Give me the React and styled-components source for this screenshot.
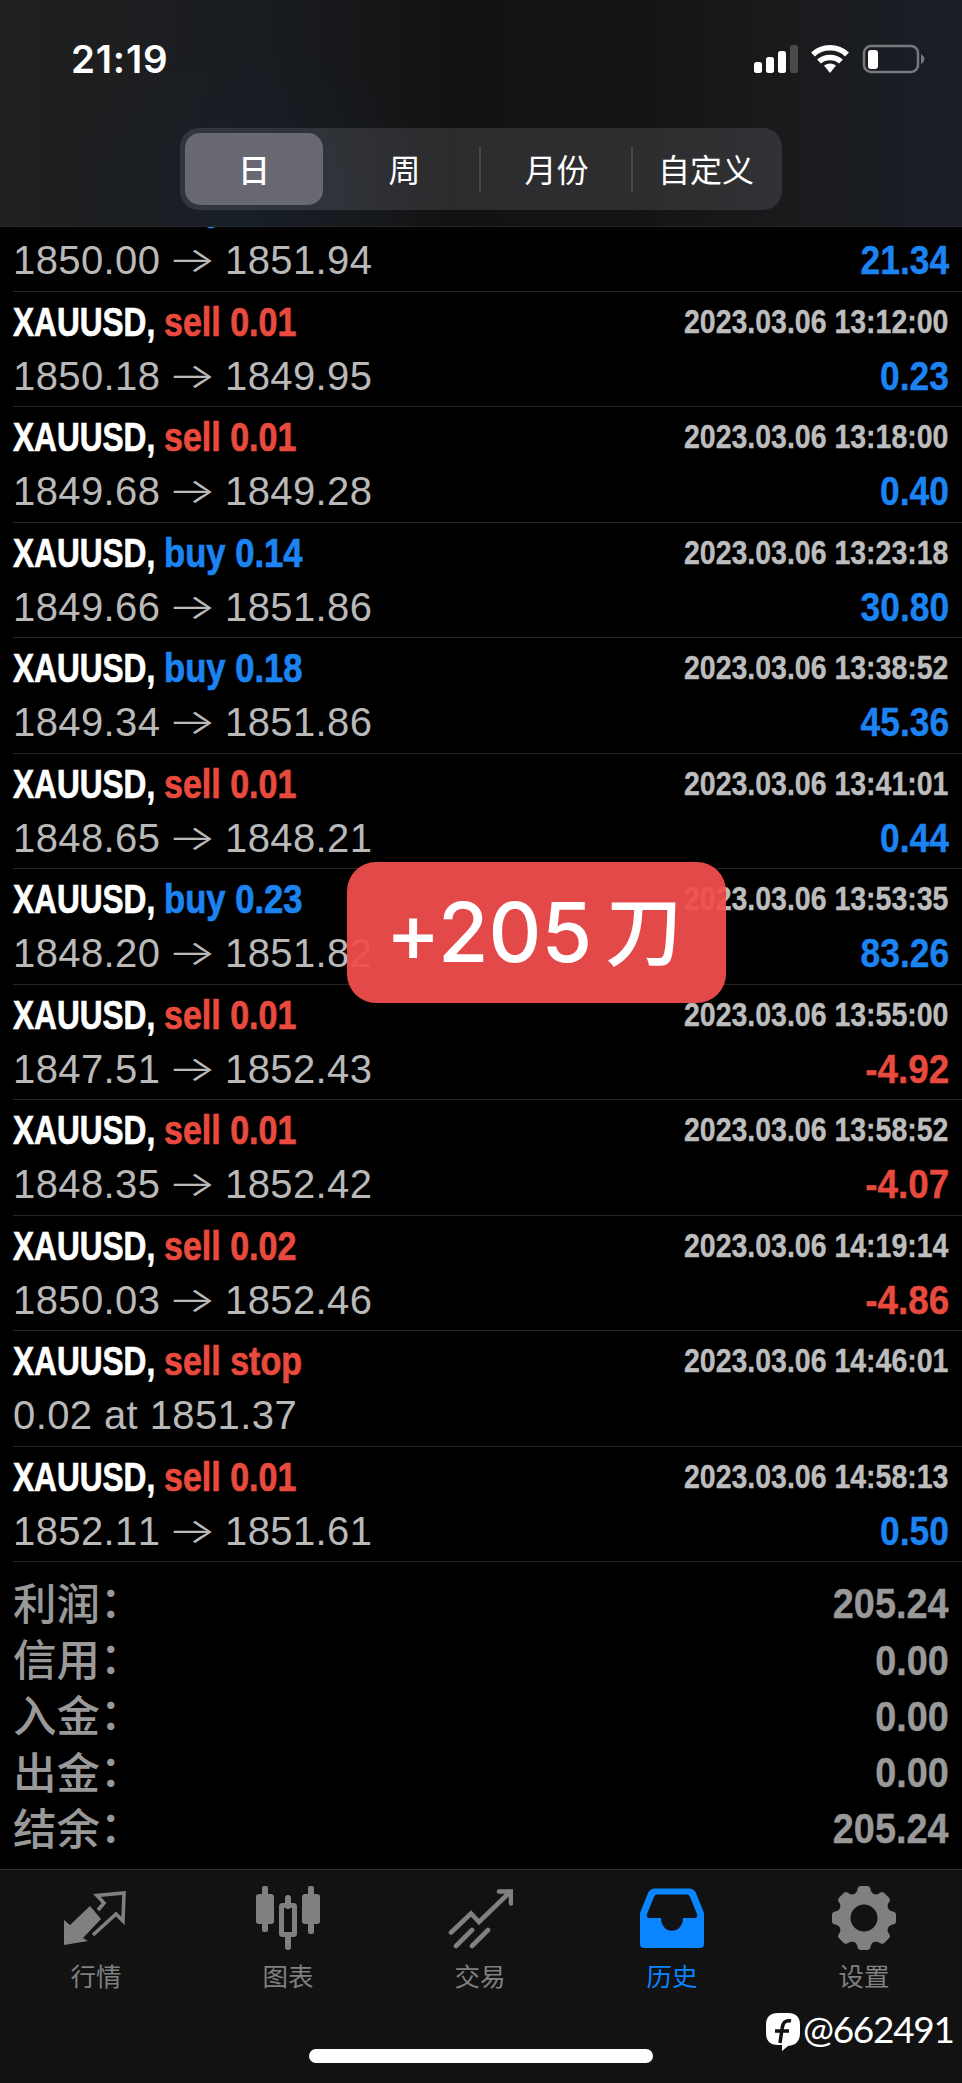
import React from 'react';
import styled, { createGlobalStyle } from 'styled-components';

const RED = '#e84a3e';
const BLUE = '#1c84f2';
const CJK = '"Noto Sans CJK SC", sans-serif';

const Global = createGlobalStyle`
  * { box-sizing: border-box; }
  body { margin: 0; background: #000; }
`;

const Screen = styled.div`
  position: relative;
  width: 962px;
  height: 2083px;
  overflow: hidden;
  display: flex;
  flex-direction: column;
  background: #000;
  color: #fff;
  font-family: "Liberation Sans", ${CJK};
`;

const Header = styled.header`
  flex: 0 0 227px;
  border-bottom: 1px solid #262728;
  background:
    radial-gradient(ellipse 190px 150px at 245px 195px, rgba(24, 34, 46, 0.55), transparent),
    linear-gradient(90deg, #202020 0, #1d1e20 130px, #191c21 250px, #161719 360px, #121212 450px, #141414 640px, #1a1b1d 800px, #1a1f28 962px);
`;

const StatusBar = styled.div`
  height: 128px;
  padding: 32px 37px 0 71px;
  display: flex;
  justify-content: space-between;
  align-items: flex-start;
`;

const Clock = styled.span`
  font: 600 38.5px/54px Inter, sans-serif;
  letter-spacing: 0.8px;
  color: #fff;
`;

const StatusIcons = styled.svg`
  display: block;
  width: 172px;
  height: 30px;
  margin-top: 12px;
`;

const Segments = styled.div`
  width: 602px;
  height: 82px;
  margin: 0 auto;
  padding: 5px;
  display: flex;
  align-items: center;
  border-radius: 19px;
  background: rgba(118, 118, 128, 0.26);
`;

const Segment = styled.button`
  flex: 0 0 ${(p) => p.$width}px;
  height: ${(p) => (p.$active ? 72 : 46)}px;
  padding: 0 0 2px ${(p) => p.$inset || 0}px;
  border: 0;
  border-left: ${(p) => (p.$divided ? '2px solid #48484b' : '0')};
  border-radius: ${(p) => (p.$active ? '15px' : '0')};
  background: ${(p) => (p.$active ? '#686872' : 'none')};
  color: #fff;
  font: ${(p) => (p.$active ? 500 : 400)} 32px/44px ${CJK};
`;

const History = styled.main`
  flex: 0 0 1642px;
  overflow: hidden;
`;

const Deal = styled.article`
  height: 115.47px;
  margin-top: ${(p) => (p.$cut ? '-50.5px' : '0')};
  margin-left: 13px;
  padding: ${(p) => (p.$cut ? 2 : 3)}px 13.3px 0 0;
  border-bottom: 1px solid #262626;
`;

const Line = styled.div`
  height: 54px;
  display: flex;
  align-items: center;
  white-space: pre;
`;

const Narrow = styled.span`
  display: block;
  transform: scaleX(${(p) => p.$scale});
  transform-origin: ${(p) => (p.$right ? 'right' : 'left')} center;
`;

const Symbol = styled.div`
  flex: 0 0 151px;
  min-width: 0;
  font: bold 40px/54px "Liberation Sans", sans-serif;
  font-kerning: none;
  -webkit-text-stroke: 0.7px currentColor;
`;

const Action = styled.div`
  flex: 1;
  color: ${(p) => p.$color};
  font: bold 40px/54px "Liberation Sans", sans-serif;
  -webkit-text-stroke: 0.7px currentColor;
`;

const Stamp = styled.div`
  color: #bdbdbd;
  font: bold 33px/54px "Liberation Sans", sans-serif;
  -webkit-text-stroke: 0.4px currentColor;
`;

const Price = styled.div`
  flex: 1;
  display: flex;
  color: #b9b9b9;
  font: 40px/54px "Liberation Sans", sans-serif;
  font-kerning: none;
  letter-spacing: 0.4px;
`;

const Arrow = styled.span`
  width: 64.6px;
  text-align: center;
  font: 300 35px/54px Inter, sans-serif;
  transform: translateY(-1px) scaleX(1.48);
`;

const Value = styled.div`
  color: ${(p) => p.$color};
  font: bold 40px/54px "Liberation Sans", sans-serif;
  -webkit-text-stroke: 0.4px currentColor;
`;

const Summary = styled.section`
  padding: 14px 13.5px 0 13px;
`;

const SummaryRow = styled.div`
  height: 56.3px;
  display: flex;
  justify-content: space-between;
  align-items: center;
  color: #999;
`;

const SummaryLabel = styled.span`
  padding-bottom: 5px;
  font: 500 43.5px/50px ${CJK};
`;

const Colon = styled.span`
  margin-left: -11px;
  font-family: "Noto Sans CJK TC", sans-serif;
`;

const Amount = styled.div`
  font: bold 42px/50px "Liberation Sans", sans-serif;
  -webkit-text-stroke: 0.4px currentColor;
`;

const TabBar = styled.nav`
  flex: 1;
  padding-right: 2px;
  border-top: 1px solid #303030;
  background: #121212;
  display: flex;
  align-items: flex-start;
`;

const Tab = styled.button`
  flex: 1;
  padding: 15px 0 0;
  border: 0;
  background: none;
  color: ${(p) => (p.$active ? '#0a84ff' : '#808080')};
  display: flex;
  flex-direction: column;
  align-items: center;
  font: 400 25.5px/30px ${CJK};
  svg { display: block; width: 66px; height: 66px; margin-bottom: 9px; }
`;

const Sticker = styled.div`
  position: absolute;
  left: 347px;
  top: 862px;
  width: 379px;
  height: 141px;
  padding-right: 5px;
  border-radius: 29px;
  background: rgba(241, 78, 78, 0.94);
  display: flex;
  align-items: center;
  justify-content: center;
  font: 500 82px/120px Inter, ${CJK};
  font-feature-settings: "calt" 0;
`;

const StickerUnit = styled.span`
  margin: 0 0 12px 13px;
  font: 500 77px/120px ${CJK};
`;

const HomeIndicator = styled.div`
  position: absolute;
  left: 309px;
  top: 2049px;
  width: 344px;
  height: 14px;
  border-radius: 7px;
  background: #fff;
`;

const Watermark = styled.div`
  position: absolute;
  left: 766px;
  top: 2005px;
  height: 48px;
  display: flex;
  align-items: center;
  gap: 3px;
  font: 400 37px/48px Lato, sans-serif;
  letter-spacing: -1.3px;
  svg { width: 34px; height: 38px; margin-top: 5px; }
`;

const deals = [
  ['buy', '0.11', '2023.03.06 13:05:00', '1850.00', '1851.94', '21.34'],
  ['sell', '0.01', '2023.03.06 13:12:00', '1850.18', '1849.95', '0.23'],
  ['sell', '0.01', '2023.03.06 13:18:00', '1849.68', '1849.28', '0.40'],
  ['buy', '0.14', '2023.03.06 13:23:18', '1849.66', '1851.86', '30.80'],
  ['buy', '0.18', '2023.03.06 13:38:52', '1849.34', '1851.86', '45.36'],
  ['sell', '0.01', '2023.03.06 13:41:01', '1848.65', '1848.21', '0.44'],
  ['buy', '0.23', '2023.03.06 13:53:35', '1848.20', '1851.82', '83.26'],
  ['sell', '0.01', '2023.03.06 13:55:00', '1847.51', '1852.43', '-4.92'],
  ['sell', '0.01', '2023.03.06 13:58:52', '1848.35', '1852.42', '-4.07'],
  ['sell', '0.02', '2023.03.06 14:19:14', '1850.03', '1852.46', '-4.86'],
  ['sell', 'stop', '2023.03.06 14:46:01', '0.02 at 1851.37', null, null],
  ['sell', '0.01', '2023.03.06 14:58:13', '1852.11', '1851.61', '0.50'],
];

const totals = [
  ['利润', '205.24'],
  ['信用', '0.00'],
  ['入金', '0.00'],
  ['出金', '0.00'],
  ['结余', '205.24'],
];

const QuotesIcon = () => (
  <svg viewBox="0 0 66 66" fill="currentColor">
    <path d="M1 35 7 40 27 21 38 34 20 53 25 56 1 60Z" />
    <path d="M35 25 41 18 34 10.500 61 8 60 36 53 29 30 50" fill="none" stroke="currentColor" strokeWidth="3.6" />
  </svg>
);

const ChartIcon = () => (
  <svg viewBox="0 0 66 66" fill="currentColor">
    <rect x="7" y="1" width="6" height="46" rx="2" />
    <rect x="1" y="9" width="18" height="30" rx="3" />
    <rect x="53" y="1" width="6" height="48" rx="2" />
    <rect x="47" y="9" width="18" height="30" rx="3" />
    <path d="M33 13v8M33 50v12" stroke="currentColor" strokeWidth="6" strokeLinecap="round" />
    <rect x="26.5" y="20.5" width="13" height="29" rx="1" fill="none" stroke="currentColor" strokeWidth="5" />
  </svg>
);

const TradeIcon = () => (
  <svg viewBox="0 0 66 66" fill="none" stroke="currentColor" strokeWidth="4.6" strokeLinecap="round">
    <path d="M4 47.500 24 28.500 32 37 63 7" />
    <path d="M52 6.500h12v12M9 61 25 45M25 61 41 45" />
  </svg>
);

const HistoryIcon = () => (
  <svg viewBox="0 0 66 66" fill="currentColor">
    <path fillRule="evenodd" d="M16 3.500H50Q55 3.500 57 8L65 28V59Q65 63 61 63H5Q1 63 1 59V28L9 8Q11 3.500 16 3.500ZM18 9.500Q16 9.500 15 12L8 29Q7 33 11 33H22C22 50 44 50 44 33H55Q59 33 58 29L51 12Q50 9.500 48 9.500Z" />
  </svg>
);

const SettingsIcon = () => (
  <svg viewBox="0 0 66 66">
    <g fill="currentColor">
      <circle cx="33" cy="33" r="26" />
      {[0, 45, 90, 135, 180, 225, 270, 315].map((a) => (
        <path key={a} transform={`rotate(${a} 33 33)`} d="M22 10Q26 8 26.500 4Q27 1 30 1H36Q39 1 39.500 4Q40 8 44 10L40 16H26Z" />
      ))}
    </g>
    <circle cx="33" cy="33" r="13.500" fill="#121212" />
  </svg>
);

const tabs = [
  ['行情', QuotesIcon],
  ['图表', ChartIcon],
  ['交易', TradeIcon],
  ['历史', HistoryIcon],
  ['设置', SettingsIcon],
];

function DealRow({ deal, cut }) {
  const [side, lot, time, open, close, profit] = deal;
  return (
    <Deal $cut={cut}>
      <Line>
        <Symbol><Narrow $scale={0.79}>XAUUSD,</Narrow></Symbol>
        <Action $color={side === 'buy' ? BLUE : RED}>
          <Narrow $scale={side === 'buy' ? 0.865 : 0.85}>{side} {lot}</Narrow>
        </Action>
        {!cut && <Stamp><Narrow $right $scale={0.863}>{time}</Narrow></Stamp>}
      </Line>
      <Line>
        <Price>
          {open}
          {close && <Arrow>→</Arrow>}
          {close}
        </Price>
        {profit && (
          <Value $color={profit.startsWith('-') ? RED : BLUE}>
            <Narrow $right $scale={profit.startsWith('-') ? 0.92 : 0.885}>{profit}</Narrow>
          </Value>
        )}
      </Line>
    </Deal>
  );
}

export default function App() {
  return (
    <Screen>
      <Global />
      <Header>
        <StatusBar>
          <Clock>21:19</Clock>
          <StatusIcons viewBox="0 0 172 30">
            <g fill="#fff">
              <rect x="1" y="18" width="8" height="11" rx="2.500" />
              <rect x="13" y="13" width="8" height="16" rx="2.500" />
              <rect x="25" y="7" width="8" height="22" rx="2.500" />
              <rect x="37" y="1" width="8" height="28" rx="2.500" fill="#4b4b4d" />
              <path d="M71 21.500Q77 17.500 83 21.500L77 29Z" />
            </g>
            <g fill="none" stroke="#fff" strokeWidth="5.500">
              <path d="M60 10.500C69 1.500 85 1.500 94 10.500" />
              <path d="M66 17.500C72 12 82 12 88 17.500" />
            </g>
            <rect x="111" y="2" width="54" height="26" rx="7" fill="none" stroke="#76787c" strokeWidth="2.500" />
            <rect x="115" y="6" width="10" height="19" rx="3" fill="#fff" />
            <path d="M168 10Q175 15 168 20Z" fill="#76787c" />
          </StatusIcons>
        </StatusBar>
        <Segments>
          <Segment $active $width={138}>日</Segment>
          <Segment $width={156} $inset={7}>周</Segment>
          <Segment $divided $width={152} $inset={1}>月份</Segment>
          <Segment $divided $width={146} $inset={2}>自定义</Segment>
        </Segments>
      </Header>
      <History>
        {deals.map((d, i) => <DealRow key={d[2]} deal={d} cut={i === 0} />)}
        <Summary>
          {totals.map(([label, amount]) => (
            <SummaryRow key={label}>
              <SummaryLabel>{label}<Colon>：</Colon></SummaryLabel>
              <Amount><Narrow $right $scale={0.9}>{amount}</Narrow></Amount>
            </SummaryRow>
          ))}
        </Summary>
      </History>
      <TabBar>
        {tabs.map(([label, Icon]) => (
          <Tab key={label} $active={label === '历史'}><Icon />{label}</Tab>
        ))}
      </TabBar>
      <Sticker>+205<StickerUnit>刀</StickerUnit></Sticker>
      <HomeIndicator />
      <Watermark>
        <svg viewBox="0 0 34 38">
          <path fill="#fff" d="M12 0H22Q34 0 34 12V20Q34 32 22 33L16 38V32H12Q0 32 0 20V12Q0 0 12 0Z" />
          <path d="M25 8Q17 6 16 16L14 30M9 18H23" fill="none" stroke="#121212" strokeWidth="3.500" />
        </svg>
        @662491
      </Watermark>
    </Screen>
  );
}
